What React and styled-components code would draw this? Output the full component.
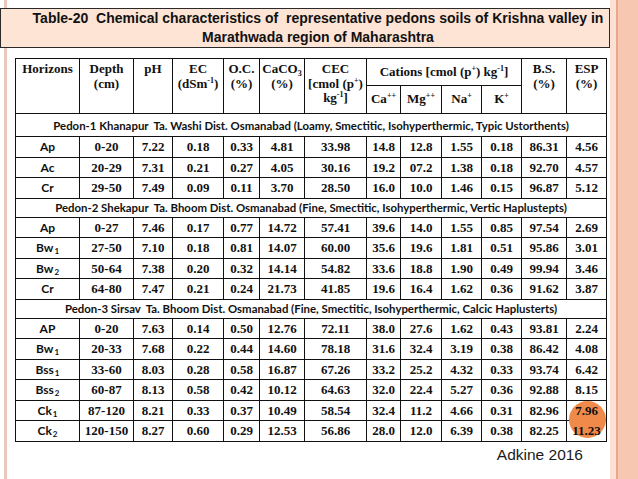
import React from "react";
import styled, { createGlobalStyle } from "styled-components";

const Global = createGlobalStyle`
  html, body { margin: 0; padding: 0; }
  body {
    width: 638px;
    min-height: 479px;
    background:
      linear-gradient(to right,
        #ffffff 0px, #ffffff 4px,
        #e9c8bc 4px, #e9c8bc 7px,
        #ffffff 7px, #ffffff 610px,
        #fbe1d5 610px, #fbe1d5 616px,
        #eaa68b 616px, #eaa68b 618px,
        #f7c7b2 618px, #f7c7b2 638px);
    font-family: "Liberation Sans", Arial, sans-serif;
    overflow: hidden;
  }
`;

const Page = styled.div`
  display: flex;
  flex-direction: column;
  width: 638px;
  height: 479px;
  padding-top: 8px;
  box-sizing: border-box;
`;

const TitleBox = styled.div`
  width: 610px;
  height: 40px;
  box-sizing: border-box;
  border: 1px solid #2a2a2a;
  background: #fde4d5;
  padding-left: 26px;
  text-align: center;
  font-family: "Liberation Sans", Arial, sans-serif;
  font-weight: bold;
  font-size: 14px;
  line-height: 18.5px;
  color: #111;
  white-space: pre;
`;

const TableWrap = styled.div`
  position: relative;
  margin-top: 10px;
  margin-left: 15px;
  width: 591px;
`;

const Table = styled.table`
  border-collapse: collapse;
  table-layout: fixed;
  width: 591px;
  font-family: "Liberation Serif", "Times New Roman", serif;
  font-weight: bold;
  font-size: 13px;
  color: #111;
  background: #fff;
  td, th { border: 1px solid #111; padding: 0; }
`;

const Th = styled.th`
  vertical-align: ${(p) => (p.$mid ? "middle" : "top")};
  text-align: center;
  padding-top: ${(p) => (p.$mid ? "0" : "3px")} !important;
  line-height: 14.5px;
  font-weight: bold;
`;

const HeadRow = styled.tr`
  height: ${(p) => p.$h}px;
`;

const DataRow = styled.tr`
  height: 20.5px;
`;

const Td = styled.td`
  text-align: center;
  vertical-align: middle;
  line-height: 15px;
  position: relative;
`;

const Horizon = styled.td`
  text-align: center;
  vertical-align: middle;
  font-family: Lato, "Open Sans", sans-serif;
  font-weight: 700;
  font-size: 12px;
  line-height: 15px;
  sub { font-size: 8px; vertical-align: -2px; line-height: 0; margin-left: 1px; }
`;

const PedonRow = styled.tr`
  height: ${(p) => p.$h}px;
`;

const PedonCell = styled.td`
  text-align: center;
  vertical-align: middle;
  font-family: Lato, "Open Sans", sans-serif;
  font-weight: 700;
  font-size: 11.4px;
  white-space: pre;
  line-height: 15px;
`;

const Sup = styled.sup`
  font-size: 8px;
  vertical-align: 5px;
  line-height: 0;
`;

const Sub = styled.sub`
  font-size: 8px;
  vertical-align: -3px;
  line-height: 0;
`;

const Above = styled.span`
  position: relative;
  z-index: 2;
`;

const Circle = styled.div`
  position: absolute;
  left: 554px;
  top: 343px;
  width: 37px;
  height: 37px;
  border-radius: 50%;
  background: #ef8a4b;
  z-index: 1;
`;

const Caption = styled.div`
  align-self: flex-end;
  margin-right: 55px;
  margin-top: 4px;
  font-family: "Liberation Sans", Arial, sans-serif;
  font-size: 15.5px;
  line-height: 18px;
  color: #1a1a1a;
`;

const cols = [64, 54, 39, 51, 36, 45, 62, 34, 41, 40, 40, 45, 40];

const H = (name, sub) =>
  sub ? (
    <>
      {name}
      <sub>{sub}</sub>
    </>
  ) : (
    name
  );

const pedons = [
  {
    title:
      "Pedon-1 Khanapur  Ta. Washi Dist. Osmanabad (Loamy, Smectitic, Isohyperthermic, Typic Ustorthents)",
    h: 23,
    rows: [
      [H("Ap"), "0-20", "7.22", "0.18", "0.33", "4.81", "33.98", "14.8", "12.8", "1.55", "0.18", "86.31", "4.56"],
      [H("Ac"), "20-29", "7.31", "0.21", "0.27", "4.05", "30.16", "19.2", "07.2", "1.38", "0.18", "92.70", "4.57"],
      [H("Cr"), "29-50", "7.49", "0.09", "0.11", "3.70", "28.50", "16.0", "10.0", "1.46", "0.15", "96.87", "5.12"],
    ],
  },
  {
    title:
      "Pedon-2 Shekapur  Ta. Bhoom Dist. Osmanabad (Fine, Smectitic, Isohyperthermic, Vertic Haplustepts)",
    h: 19,
    rows: [
      [H("Ap"), "0-27", "7.46", "0.17", "0.77", "14.72", "57.41", "39.6", "14.0", "1.55", "0.85", "97.54", "2.69"],
      [H("Bw", "1"), "27-50", "7.10", "0.18", "0.81", "14.07", "60.00", "35.6", "19.6", "1.81", "0.51", "95.86", "3.01"],
      [H("Bw", "2"), "50-64", "7.38", "0.20", "0.32", "14.14", "54.82", "33.6", "18.8", "1.90", "0.49", "99.94", "3.46"],
      [H("Cr"), "64-80", "7.47", "0.21", "0.24", "21.73", "41.85", "19.6", "16.4", "1.62", "0.36", "91.62", "3.87"],
    ],
  },
  {
    title:
      "Pedon-3 Sirsav  Ta. Bhoom Dist. Osmanabad (Fine, Smectitic, Isohyperthermic, Calcic Haplusterts)",
    h: 19,
    rows: [
      [H("AP"), "0-20", "7.63", "0.14", "0.50", "12.76", "72.11", "38.0", "27.6", "1.62", "0.43", "93.81", "2.24"],
      [H("Bw", "1"), "20-33", "7.68", "0.22", "0.44", "14.60", "78.18", "31.6", "32.4", "3.19", "0.38", "86.42", "4.08"],
      [H("Bss", "1"), "33-60", "8.03", "0.28", "0.58", "16.87", "67.26", "33.2", "25.2", "4.32", "0.33", "93.74", "6.42"],
      [H("Bss", "2"), "60-87", "8.13", "0.58", "0.42", "10.12", "64.63", "32.0", "22.4", "5.27", "0.36", "92.88", "8.15"],
      [H("Ck", "1"), "87-120", "8.21", "0.33", "0.37", "10.49", "58.54", "32.4", "11.2", "4.66", "0.31", "82.96", "7.96"],
      [H("Ck", "2"), "120-150", "8.27", "0.60", "0.29", "12.53", "56.86", "28.0", "12.0", "6.39", "0.38", "82.25", "11.23"],
    ],
  },
];

export default function App() {
  return (
    <>
      <Global />
      <Page>
        <TitleBox>
          {"Table-20  Chemical characteristics of  representative pedons soils of Krishna valley in\nMarathwada region of Maharashtra"}
        </TitleBox>
        <TableWrap>
          <Circle />
          <Table>
            <colgroup>
              {cols.map((w, i) => (
                <col key={i} style={{ width: w }} />
              ))}
            </colgroup>
            <thead>
              <HeadRow $h={27}>
                <Th rowSpan={2}>Horizons</Th>
                <Th rowSpan={2}>
                  Depth
                  <br />
                  (cm)
                </Th>
                <Th rowSpan={2}>pH</Th>
                <Th rowSpan={2}>
                  EC
                  <br />
                  (dSm<Sup>-1</Sup>)
                </Th>
                <Th rowSpan={2}>
                  O.C.
                  <br />
                  (%)
                </Th>
                <Th rowSpan={2}>
                  CaCO<Sub>3</Sub>
                  <br />
                  (%)
                </Th>
                <Th rowSpan={2}>
                  CEC
                  <br />
                  [cmol (p<Sup>+</Sup>)
                  <br />
                  kg<Sup>-1</Sup>]
                </Th>
                <Th colSpan={4} $mid>
                  Cations [cmol (p<Sup>+</Sup>) kg<Sup>-1</Sup>]
                </Th>
                <Th rowSpan={2}>
                  B.S.
                  <br />
                  (%)
                </Th>
                <Th rowSpan={2}>
                  ESP
                  <br />
                  (%)
                </Th>
              </HeadRow>
              <HeadRow $h={28}>
                <Th $mid>
                  Ca<Sup>++</Sup>
                </Th>
                <Th $mid>
                  Mg<Sup>++</Sup>
                </Th>
                <Th $mid>
                  Na<Sup>+</Sup>
                </Th>
                <Th $mid>
                  K<Sup>+</Sup>
                </Th>
              </HeadRow>
            </thead>
            <tbody>
              {pedons.map((p, pi) => (
                <React.Fragment key={pi}>
                  <PedonRow $h={p.h}>
                    <PedonCell colSpan={13}>{p.title}</PedonCell>
                  </PedonRow>
                  {p.rows.map((r, ri) => (
                    <DataRow key={ri}>
                      <Horizon>{r[0]}</Horizon>
                      {r.slice(1).map((v, ci) => (
                        <Td key={ci}>
                          <Above>{v}</Above>
                        </Td>
                      ))}
                    </DataRow>
                  ))}
                </React.Fragment>
              ))}
            </tbody>
          </Table>
        </TableWrap>
        <Caption>Adkine 2016</Caption>
      </Page>
    </>
  );
}
